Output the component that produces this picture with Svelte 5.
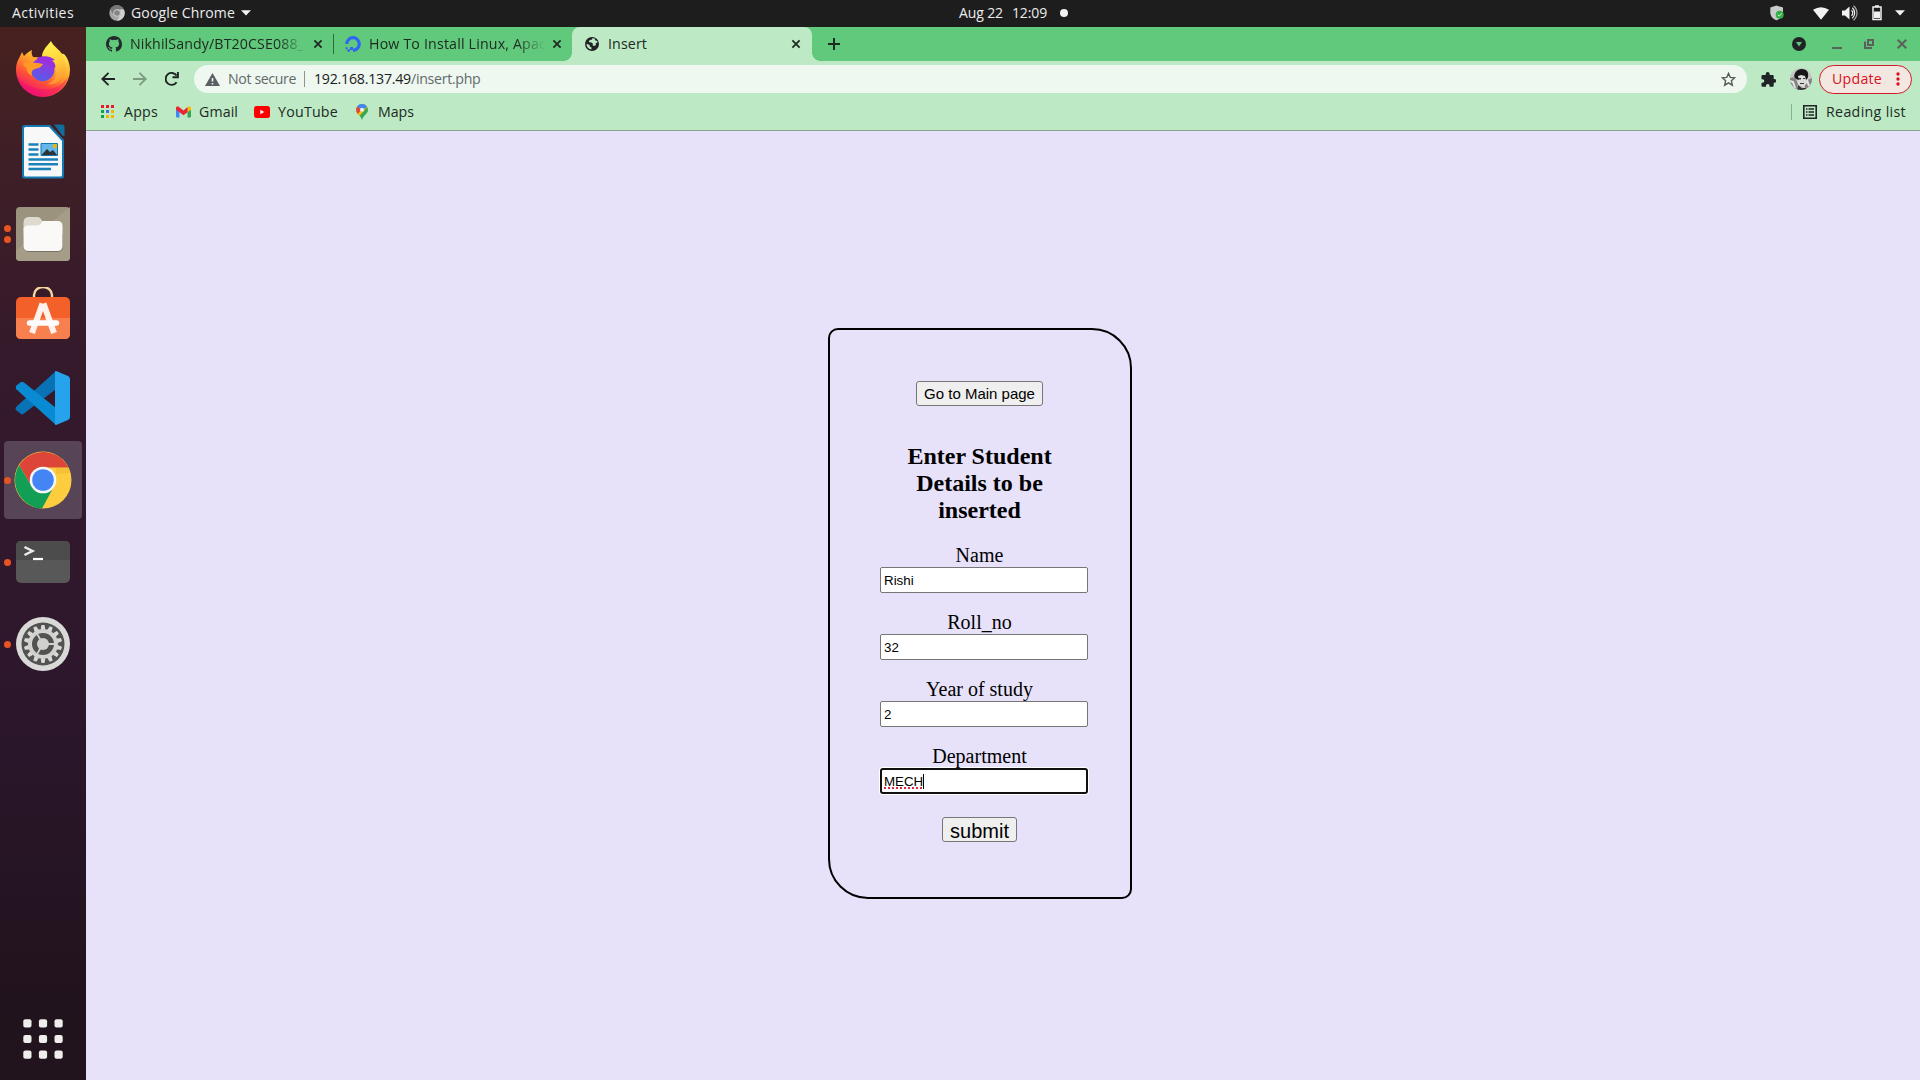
<script>
  const bookmarks = [
    { name: 'Apps', width: 34, icon: 'apps' },
    { name: 'Gmail', width: 39, icon: 'gmail' },
    { name: 'YouTube', width: 60, icon: 'youtube' },
    { name: 'Maps', width: 36, icon: 'maps' }
  ];

  const launchers = [
    { name: 'firefox', windows: 0 },
    { name: 'writer', windows: 0 },
    { name: 'files', windows: 2 },
    { name: 'software', windows: 0 },
    { name: 'code', windows: 0 },
    { name: 'chrome', windows: 1, active: true },
    { name: 'terminal', windows: 1 },
    { name: 'settings', windows: 1 }
  ];

  const fields = [
    { label: 'Name', value: 'Rishi' },
    { label: 'Roll_no', value: '32' },
    { label: 'Year of study', value: '2' },
    { label: 'Department', value: 'MECH', focused: true }
  ];

  const teeth = Array.from({ length: 14 }, (_, i) => (i * 360) / 14);
  const gridDots = [0, 1, 2].flatMap((r) => [0, 1, 2].map((c) => ({ r, c })));
  const appColors = ['#ea1a30', '#ea1a30', '#ea1a30', '#12a150', '#3b6ff0', '#f5b400', '#12a150', '#f5b400', '#f5b400'];

  // Adjusts tracking so that a label fills the width its slot has.
  function fit(node, width) {
    const natural = node.getBoundingClientRect().width;
    const spacing = (width - natural) / node.textContent.length;
    node.style.letterSpacing = `${spacing}px`;
  }
</script>

{#snippet cross()}
  <svg class="cross" width="16" height="16" viewBox="0 0 16 16"><path d="M4.4 4.4l7.2 7.2M11.6 4.4l-7.2 7.2" /></svg>
{/snippet}

{#snippet caret()}
  <svg width="10" height="6" viewBox="0 0 10 6"><path d="M0 .3h10L5 5.6z" fill="#f2f2f2" /></svg>
{/snippet}

<div class="desktop">
  <header class="topbar">
    <div class="top-left">
      <span use:fit={62}>Activities</span>
      <div class="app-menu">
        <svg width="16" height="16" viewBox="0 0 16 16">
          <circle cx="8" cy="8" r="7.7" fill="#a5a5a5" />
          <path d="M1.3 4.2A7.7 7.7 0 0 1 14.7 4.2H8L4.7 10z" fill="#777" />
          <path d="M14.8 4.4A7.7 7.7 0 0 1 8 15.7L11.3 10V4.4z" fill="#d0d0d0" />
          <circle cx="8" cy="8" r="3.8" fill="#c9c9c9" />
          <circle cx="8" cy="8" r="2.8" fill="#858585" />
        </svg>
        <span use:fit={104}>Google Chrome</span>
        {@render caret()}
      </div>
    </div>
    <div class="clock">
      <span use:fit={44}>Aug 22</span>
      <span use:fit={35}>12:09</span>
      <i></i>
    </div>
    <div class="status">
      <svg class="shield" width="14" height="16" viewBox="0 0 14 16">
        <path d="M6.500.5L13 2.600v4.800c0 3.700-2.800 6.200-6.500 7.900C2.800 13.600.3 11.100.3 7.400V2.600z" fill="#c9ccca" />
        <circle cx="9.700" cy="9.700" r="4" fill="#2faf45" />
        <path d="M7.700 9.700l1.500 1.500 2.600-2.900" fill="none" stroke="#d5f5da" />
      </svg>
      <svg class="wifi" width="16" height="13" viewBox="0 0 16 13"><path d="M0 2.800Q8-2.400 16 2.800L8 12.800z" fill="#f2f2f2" /></svg>
      <svg class="volume" width="16" height="16" viewBox="0 0 16 16">
        <path d="M0 5.500h3L7.500 1.500v13L3 10.500H0z" fill="#f2f2f2" />
        <path d="M9.500 5.200c1.700 1.600 1.700 4 0 5.600M10.300 2.800c3.100 2.600 3.100 7.800 0 10.400" fill="none" stroke="#f2f2f2" stroke-width="1.200" />
        <path d="M11.500.8c4.600 3.800 4.600 10.600 0 14.400" fill="none" stroke="#aaa" stroke-width="1.200" />
      </svg>
      <svg class="battery" width="10" height="16" viewBox="0 0 10 16">
        <path d="M3 1h4M1 2h8v12.500H1z" fill="none" stroke="#f2f2f2" stroke-width="1.500" />
        <path d="M2 6.500h6V13H2z" fill="#f2f2f2" />
      </svg>
      {@render caret()}
    </div>
  </header>

  <div class="workspace">
    <nav class="dock">
      {#each launchers as app}
        <div class="launcher" class:active={app.active}>
          <span class="pips">{#each Array(app.windows) as _}<i></i>{/each}</span>
          <svg width="58" height="58" viewBox="0 0 58 58">
            {#if app.name === 'firefox'}
              <defs>
                <linearGradient id="ff-body" x1=".85" y1=".1" x2=".3" y2="1">
                  <stop offset="0" stop-color="#ffe14a" /><stop offset=".35" stop-color="#ffa62a" />
                  <stop offset=".65" stop-color="#ff5038" /><stop offset="1" stop-color="#ee0a78" />
                </linearGradient>
                <linearGradient id="ff-globe" x1=".7" y1="0" x2=".3" y2="1">
                  <stop offset="0" stop-color="#a62bdc" /><stop offset="1" stop-color="#5060e8" />
                </linearGradient>
                <linearGradient id="ff-flame" x1=".4" y1="0" x2=".6" y2="1">
                  <stop offset="0" stop-color="#fff44f" /><stop offset=".5" stop-color="#ffd03c" /><stop offset="1" stop-color="#ff9030" />
                </linearGradient>
              </defs>
              <path d="M2 28C2 21 6 16 8 11c1 2 1.500 3 2 4 2-2 4-4 8-6-1 3 0 5 1 7 6 0 12 1 16 4 5-6 10-9 15-7 3 3 6 9 6 16a27 27 0 0 1-54 0z" fill="url(#ff-body)" />
              <path d="M37 0c2 6 11 9 12 16 3 7 4 14-1 21-4 5-9 7-14 6 7-3 10-9 7-16-2-5-6-9-13-11C28 10 32 6 37 0z" fill="url(#ff-flame)" />
              <circle cx="28.700" cy="28.500" r="11.800" fill="url(#ff-globe)" />
              <path d="M23 17c6-3 14-2 18 2l-3 .5c3 2 4 5 3 8-3-5-8-7-16-6z" fill="#9a2fdd" />
              <path d="M9 23c4-3 8-2 12-1 3 0 6 .5 8 1-2 4-5 4-8 5-3 1-4 3-3 7-4-3-6-5-5-8-2-1-3-2-4-4z" fill="#ff9b24" />
              <path d="M3 34c7 15 39 22 51 2-2 8-10 19-25 19C15 55 5 46 3 34z" fill="#f20d76" opacity=".45" />
            {:else if app.name === 'writer'}
              <path d="M10.500 2h25.500L50 17v36q0 2.500-2.500 2.500h-37Q8 55.500 8 53V4.500Q8 2 10.500 2z" fill="#1379b2" />
              <path d="M11.500 4H35L48 18v34q0 1.500-1.500 1.500h-35Q10 53.500 10 52V5.500Q10 4 11.500 4z" fill="#f8f8f8" />
              <path d="M40 1.500h8q2.500 0 2.500 2.500v9q-2 0-3-1.500z" fill="#126d9e" />
              <path d="M14.500 21.500h10M14.500 26.500h10M14.500 31.500h10M14.500 36.500H44M14.500 41.200H44M14.500 46H37" stroke="#1b82b9" stroke-width="2.600" />
              <path d="M27 20.500h16.500v12H27z" fill="#64b7e8" stroke="#1478af" />
              <circle cx="41" cy="23" r="2.200" fill="#e8b90a" />
              <path d="M27.500 32l5.500-6 3 3 3-2 4 5z" fill="#2e3335" />
            {:else if app.name === 'files'}
              <rect x="2" y="2" width="54" height="54" rx="4" fill="#9c937f" />
              <path d="M56 2L2 45v7q0 4 4 4h46q4 0 4-4z" fill="#a59d88" />
              <path d="M9.500 18q0-6 5-6h9q2 0 3.500 2l2 3v8h-19.500z" fill="#dedacf" />
              <rect x="9.500" y="26" width="39.500" height="21" rx="5" fill="#777166" />
              <path d="M9.500 25q0-4.500 4.500-4.500h9q2 0 4-2l1.500-2.500h15q5 0 5 5V41q0 5-5 5h-29q-5 0-5-5z" fill="#faf9f8" />
            {:else if app.name === 'software'}
              <path d="M20 10V8a9 8 0 0 1 18 0v2" fill="none" stroke="#f6d6a1" stroke-width="2.400" />
              <rect x="2" y="10" width="54" height="42" rx="5" fill="#f4602a" />
              <path d="M2 31h54v16q0 5-5 5H7q-5 0-5-5z" fill="#f87f4e" />
              <path d="M28.500 16.500L18 46M29.500 16.500L40 46" stroke="#fff1eb" stroke-width="6" />
              <path d="M15.500 36h27" stroke="#fff" stroke-width="5.500" stroke-linecap="round" />
            {:else if app.name === 'code'}
              <path d="M2 38q-1 2 0 3l5 4q1 1 3-.5L42 20V2z" fill="#0872b5" />
              <path d="M2 19q-1-2 1-3l4-3q1-.500 3 .500L42 39v17L2 20z" fill="#098bd4" />
              <path d="M42 2l12 5q2 1 2 3v38q0 2-2 3l-12 5q-1 0-1-1V3q0-1 1-1z" fill="#26a3ed" />
            {:else if app.name === 'chrome'}
              <circle cx="29" cy="29" r="28.500" fill="#fdcd3f" />
              <path d="M5.200 14.200A28.500 28.500 0 0 1 54.500 16.500H29L18 36z" fill="#dd4539" />
              <path d="M5.200 14.200A28.500 28.500 0 0 0 28 57.500L40 35.500 18 36z" fill="#139e56" />
              <path d="M42 17h13l.500 5L42 23z" fill="#efb52f" opacity=".55" />
              <circle cx="29" cy="29" r="13.300" fill="#f7f7f7" />
              <circle cx="29" cy="29" r="10.800" fill="#4385f4" />
            {:else if app.name === 'terminal'}
              <rect x="2" y="8" width="54" height="42" rx="5" fill="#585858" />
              <path d="M2 27V13q0-5 5-5h44q5 0 5 5v14z" fill="#4c4c4c" />
              <path d="M10.500 14l8 4-8 4" fill="none" stroke="#eee" stroke-width="2.400" />
              <path d="M19 26h10" stroke="#fff" stroke-width="2.200" />
            {:else}
              <circle cx="29" cy="29" r="27" fill="#d9d9d7" />
              <circle cx="29" cy="29" r="21.500" fill="#525252" />
              {#each teeth as angle}
                <path d="M27.300 14l.5-3.500h2.400l.5 3.500z" fill="#dadad8" stroke="#dadad8" transform="rotate({angle} 29 29)" />
              {/each}
              <circle cx="29" cy="29" r="13" fill="none" stroke="#d2d2d0" stroke-width="4" />
              <path d="M29 29h13M29 29l-6.500-11M29 29l-6.500 11" stroke="#d2d2d0" stroke-width="1.800" />
              <circle cx="29" cy="29" r="6" fill="#d0d0ce" />
            {/if}
          </svg>
        </div>
      {/each}
      <svg class="app-grid" width="40" height="40" viewBox="0 0 40 40">
        {#each gridDots as dot}
          <rect x={.3 + dot.c * 15.6} y={.3 + dot.r * 15.6} width="8.200" height="8.200" rx="2" fill="#efeeed" />
        {/each}
      </svg>
    </nav>

    <main class="browser">
      <div class="tabstrip">
        <div class="tab first">
          <svg width="16" height="16" viewBox="0 0 16 16"><path fill="#24292e" d="M8 0C3.580 0 0 3.580 0 8c0 3.540 2.290 6.530 5.470 7.590.4.070.55-.17.55-.38 0-.19-.01-.82-.01-1.490-2.010.37-2.530-.49-2.690-.94-.09-.23-.48-.94-.82-1.130-.28-.15-.68-.52-.01-.53.63-.01 1.080.58 1.230.82.72 1.210 1.870.87 2.330.66.07-.52.28-.87.51-1.070-1.780-.2-3.640-.89-3.640-3.950 0-.87.31-1.590.82-2.150-.08-.2-.36-1.020.08-2.120 0 0 .67-.21 2.200.82a7.600 7.600 0 0 1 4 0c1.530-1.040 2.200-.82 2.200-.82.44 1.100.16 1.920.08 2.120.51.56.82 1.270.82 2.150 0 3.070-1.870 3.750-3.650 3.950.29.25.54.73.54 1.480 0 1.070-.01 1.930-.01 2.200 0 .21.15.46.55.38A8 8 0 0 0 16 8c0-4.420-3.580-8-8-8z" /></svg>
          <div class="title fade"><span use:fit={174}>NikhilSandy/BT20CSE088_</span></div>
          {@render cross()}
          <i class="tab-divider"></i>
        </div>
        <div class="tab second">
          <svg width="16" height="16" viewBox="0 0 16 16">
            <path d="M8 14.300A6.300 6.300 0 1 0 1.700 8" fill="none" stroke="#2f66f5" stroke-width="3.200" />
            <path d="M5 11h3v3H5zM2.500 13.300H5v2.400H2.500zM.7 11.300h2v2h-2z" fill="#2f66f5" />
          </svg>
          <div class="title fade"><span use:fit={177}>How To Install Linux, Apac</span></div>
          {@render cross()}
        </div>
        <div class="tab current">
          <svg width="14" height="14" viewBox="0 0 14 14">
            <circle cx="7" cy="7" r="7" fill="#202326" />
            <path d="M7.500 1.200l-.8 1.600-2 .3-1 2 2.600.4 1.800 1.200-.6 1.500 1.700.8 1.800-1-.4-1.800 1.800-.7V4.300L9.700 3l.5-1.200zM1.600 6.800l3 1.300.3 1.600 1.700.7-.3 2A5.500 5.500 0 0 1 1.600 6.800z" fill="#bce9c4" />
          </svg>
          <div class="title"><span use:fit={39}>Insert</span></div>
          {@render cross()}
        </div>
        <svg class="plus" width="12" height="12" viewBox="0 0 12 12"><path d="M6 0v12M0 6h12" stroke="#1d2b20" stroke-width="2" /></svg>
        <div class="window-buttons">
          <svg width="14" height="14" viewBox="0 0 14 14"><circle cx="7" cy="7" r="7" fill="#202326" /><path d="M4 5h6L7 9.500z" fill="#61c97b" /></svg>
          <svg width="10" height="10" viewBox="0 0 10 10"><path d="M0 9h10" stroke="#5a615c" stroke-width="2" /></svg>
          <svg width="10" height="10" viewBox="0 0 10 10"><path d="M4 1h5v5H4zM1 2.500V9h7" fill="none" stroke="#5a615c" stroke-width="2" /></svg>
          <svg width="10" height="10" viewBox="0 0 10 10"><path d="M.7.7l8.600 8.600M9.300.7L.7 9.300" stroke="#5a615c" stroke-width="2" /></svg>
        </div>
      </div>

      <div class="toolbar">
        <svg width="14" height="14" viewBox="0 0 14 14"><path d="M14 7H1.500M7.500.8L1.300 7l6.200 6.200" fill="none" stroke="#202326" stroke-width="1.900" /></svg>
        <svg width="14" height="14" viewBox="0 0 14 14"><path d="M0 7h12.500M6.500.8L12.700 7l-6.200 6.200" fill="none" stroke="#7c9b81" stroke-width="1.900" /></svg>
        <svg width="14" height="14" viewBox="0 0 14 14"><path d="M11.600 10.300a6 6 0 1 1 0-6.800M12.900 0v5.300H7.500" fill="none" stroke="#202326" stroke-width="1.900" /></svg>
        <div class="omnibox">
          <svg width="15" height="13" viewBox="0 0 15 13"><path d="M7.500 0L15 13H0z" fill="#5b5f64" /><path d="M7.500 5v3.500M7.500 10v1.500" stroke="#eef8f0" stroke-width="1.600" /></svg>
          <span class="insecure" use:fit={68}>Not secure</span>
          <i class="divider"></i>
          <span class="url"><span class="host" use:fit={97}>192.168.137.49</span><span use:fit={69.5}>/insert.php</span></span>
          <svg class="star" width="15" height="15" viewBox="0 0 16 16"><path d="M8 1.500l1.900 4.300 4.700.4-3.500 3.200 1 4.700L8 11.600l-4.100 2.500 1-4.700L1.400 6.200l4.700-.4z" fill="none" stroke="#555b58" stroke-width="1.500" /></svg>
        </div>
        <svg class="puzzle" width="15" height="15" viewBox="0 0 15 15"><path d="M1.500 3H4.700V2a2 2 0 0 1 4 0v1h3q1 0 1 1v3h.7a1.900 1.900 0 0 1 0 3.800h-.7v3q0 1-1 1H8.600v-1a1.800 1.800 0 0 0-3.600 0v1H1.500q-1 0-1-1v-3h1a1.800 1.800 0 0 0 0-3.600h-1V4q0-1 1-1z" fill="#202326" /></svg>
        <svg class="avatar" width="22" height="22" viewBox="0 0 22 22">
          <defs><clipPath id="face"><circle cx="11" cy="11" r="11" /></clipPath></defs>
          <g clip-path="url(#face)">
            <path d="M0 0h22v22H0z" fill="#c6c6c4" />
            <path d="M0 10l5-1 3 7-2 6H0zM15 13l7-3v8l-7 3z" fill="#858585" />
            <path d="M0 13l3 1 2 6M17 12l2 6" stroke="#e8e8e8" stroke-width="2" fill="none" />
            <path d="M7 7l8-1 3 4-1 5-4 4-5-3z" fill="#dcdcda" />
            <path d="M4 8q1-6 7-7 6 0 7 4 1 5-2 7l-1-4-4-1-3 1 1 4-3-1z" fill="#171717" />
            <path d="M8 10h3v1.500H8zM13 10h2v1h-2zM10 15h4v1h-4zM8 17l4 3h4v2H7z" fill="#363636" />
          </g>
        </svg>
        <div class="update">
          <span use:fit={50}>Update</span>
          <svg width="4" height="14" viewBox="0 0 4 14"><g fill="#dc1022"><circle cx="2" cy="2" r="1.700" /><circle cx="2" cy="7" r="1.700" /><circle cx="2" cy="12" r="1.700" /></g></svg>
        </div>
      </div>

      <div class="bookmarks">
        {#each bookmarks as mark}
          <div class="bookmark {mark.icon}">
            {#if mark.icon === 'apps'}
              <svg width="14" height="14" viewBox="0 0 14 14">
                {#each appColors as color, i}
                  <rect x={(i % 3) * 5} y={Math.floor(i / 3) * 5} width="3" height="3" fill={color} />
                {/each}
              </svg>
            {:else if mark.icon === 'gmail'}
              <svg width="15" height="12" viewBox="0 0 15 12">
                <path d="M0 1.500L3.500 4v7.500H1q-1 0-1-1z" fill="#4285f4" />
                <path d="M15 1.500L11.500 4v7.500H14q1 0 1-1z" fill="#34a853" />
                <path d="M11.500 1l1.500-.8q2 0 2 1.800v1.700l-3.500 2.600z" fill="#fbbc04" />
                <path d="M0 3.700V2Q.1 0 2 .2L7.500 4.500 11.500 1v5.300l-4 3-4-3z" fill="#ea2435" />
              </svg>
            {:else if mark.icon === 'youtube'}
              <svg width="16" height="12" viewBox="0 0 16 12"><rect width="16" height="12" rx="2.500" fill="#f00" /><path d="M6.300 3.700v4.600l4-2.300z" fill="#fff" /></svg>
            {:else}
              <svg width="12" height="16" viewBox="0 0 12 16">
                <path d="M6 0a5.800 5.800 0 0 1 5.800 5.800C11.800 10 7.200 11 6 15.700 4.800 11 .2 10 .2 5.800A5.800 5.800 0 0 1 6 0z" fill="#34a853" />
                <path d="M.2 5.800Q.3 3.600 1.600 2.100L6 6l-4.300 4Q.2 8 .2 5.800z" fill="#ea4335" />
                <path d="M1.600 10l8.300-8.600Q11.800 3 11.800 5.800L3.500 12z" fill="#fbbc04" />
                <path d="M1.600 2.100Q3.200.1 6 0q3.500 0 5 3L7 6 4 5z" fill="#4285f4" />
                <path d="M11.800 5.800C11.800 10 7.200 11 6 15.700 5.600 14 5 13 3.800 11.800l7.300-8.600q.7 1 .7 2.600z" fill="#34a853" />
                <circle cx="6" cy="5.700" r="2" fill="#e9f6f2" />
              </svg>
            {/if}
            <span use:fit={mark.width}>{mark.name}</span>
          </div>
        {/each}
        <div class="reading">
          <svg width="14" height="14" viewBox="0 0 14 14"><path d="M.8.8h12.400v12.400H.8z" fill="none" stroke="#202326" stroke-width="1.600" /><path d="M3 4h1.500M3 7h1.500M3 10h1.500M5.500 4H11M5.500 7H11M5.500 10H11" stroke="#202326" stroke-width="1.400" /></svg>
          <span use:fit={80}>Reading list</span>
        </div>
      </div>

      <section class="page">
        <form class="card">
          <button type="button" class="home">Go to Main page</button>
          <h3>Enter Student<br />Details to be<br />inserted</h3>
          {#each fields as field}
            <div class="field">
              <span class="label">{field.label}</span>
              <div class="input" class:focused={field.focused}>
                {#if field.focused}<span class="misspelt">{field.value}</span><i class="cursor"></i>{:else}{field.value}{/if}
              </div>
            </div>
          {/each}
          <button type="button" class="submit">submit</button>
        </form>
      </section>
    </main>
  </div>
</div>

<style>
  :global(body) { margin: 0; overflow: hidden; }
  .desktop { width: 1920px; height: 1080px; display: flex; flex-direction: column; font: 14.2px/20px "Open Sans", "Noto Sans", sans-serif; color: #202a23; }
  svg { display: block; flex: none; }
  span { white-space: nowrap; }
  .topbar { height: 27px; box-sizing: border-box; padding-bottom: 1px; background: #1d1d1d; color: #ececec; display: grid; grid-template-columns: 959px 1fr auto; align-items: center; font-size: 14px; }
  .top-left { display: flex; gap: 35px; padding-left: 12px; }
  .app-menu { display: flex; align-items: center; gap: 6px; }
  .clock { display: flex; align-items: center; gap: 9px; }
  .clock i { width: 8px; height: 8px; border-radius: 50%; background: #f2f2f2; margin-left: 4px; }
  .status { display: flex; align-items: center; padding-right: 15px; }
  .shield { margin-right: 29px; }
  .wifi, .battery { margin-right: 13px; }
  .volume { margin-right: 14px; }
  .workspace { flex: 1; display: flex; min-height: 0; }
  .dock { width: 86px; box-sizing: border-box; display: flex; flex-direction: column; align-items: center; gap: 4px; padding: 4px 0 21px; background: linear-gradient(#48211f 0, #3e1f27 140px, #351a2b 320px, #2f172c 600px, #2a162a 720px, #21131d 970px, #21141d 100%); }
  .launcher { width: 78px; height: 78px; border-radius: 4px; display: grid; place-items: center; position: relative; }
  .launcher.active { background: #574457; }
  .pips { position: absolute; left: 0; top: 0; height: 100%; display: flex; flex-direction: column; justify-content: center; gap: 4px; }
  .pips i { width: 7px; height: 7px; border-radius: 50%; background: #e95420; }
  .app-grid { margin-top: auto; }
  .browser { flex: 1; min-width: 0; display: flex; flex-direction: column; }
  .tabstrip { height: 34px; background: #61c97b; display: flex; align-items: center; }
  .tab { flex: none; box-sizing: border-box; height: 34px; display: flex; align-items: center; gap: 8px; }
  .first { width: 248px; padding-left: 20px; }
  .tab-divider { flex: none; width: 1px; height: 20px; margin-left: -1px; background: #2f6a3c; }
  .second { width: 238px; padding-left: 11px; }
  .current { position: relative; width: 240px; padding-left: 13px; gap: 9px; background: #bde9c4; border-radius: 8px 8px 0 0; }
  .current::before, .current::after { content: ""; position: absolute; bottom: 0; width: 8px; height: 8px; }
  .current::before { left: -8px; background: radial-gradient(circle at 0 0, transparent 7.500px, #bde9c4 8px); }
  .current::after { right: -8px; background: radial-gradient(circle at 100% 0, transparent 7.500px, #bde9c4 8px); }
  .title { flex: none; width: 176px; margin-right: -4px; overflow: hidden; }
  .current .title { width: 171px; margin-right: 0; }
  .fade { mask-image: linear-gradient(90deg, #000 84%, transparent); }
  .cross { fill: none; stroke: #202a23; stroke-width: 1.800; }
  .plus { margin-left: 16px; }
  .window-buttons { margin-left: auto; padding-right: 13px; display: flex; align-items: center; gap: 22px; }
  .window-buttons svg:first-child { margin-right: 5px; }
  .window-buttons svg:nth-child(2) { margin-left: -1px; }
  .window-buttons svg:nth-child(3) { margin-right: 1px; }
  .toolbar { height: 36px; background: #bde9c4; display: flex; align-items: center; padding-left: 15px; gap: 18px; }
  .omnibox { width: 1553px; height: 28px; box-sizing: border-box; border-radius: 14px; background: #eef8f0; margin-left: -3px; padding: 0 11px 0 11px; display: flex; align-items: center; color: #63696a; }
  .insecure { margin-left: 8px; }
  .divider { width: 1px; height: 16px; background: #8c9690; margin: 0 9px 0 8px; }
  .url { display: flex; }
  .host { color: #1c2021; }
  .star { margin-left: auto; }
  .puzzle { margin-left: -4px; }
  .avatar { margin-left: -4px; }
  .update { box-sizing: border-box; width: 93px; height: 29px; margin-left: -11px; border: 1px solid #d01a26; border-radius: 15px; background: #f3e8e1; color: #d9101e; display: flex; align-items: center; justify-content: space-between; padding: 0 11px 0 12px; }
  .bookmarks { box-sizing: border-box; height: 34px; background: #bde9c4; border-bottom: 1px solid #86a68b; display: flex; align-items: center; padding: 0 14px 3px 15px; }
  .bookmark { display: flex; align-items: center; gap: 9px; margin-right: 18px; }
  .bookmark.gmail { margin-right: 16px; gap: 8px; }
  .bookmark.youtube { gap: 8px; margin-right: 18px; }
  .bookmark.maps { gap: 10px; }
  .reading { margin-left: auto; display: flex; align-items: center; gap: 9px; padding-left: 12px; background: linear-gradient(#86b38d, #86b38d) left center / 1px 16px no-repeat; }
  .page { flex: 1; background: #e7e2fa; display: flex; align-items: flex-start; padding: 197px 0 0 742px; }
  .card { box-sizing: border-box; width: 304px; height: 570.500px; border: 2px solid #000; border-radius: 10px 40px; padding: 51px 50.500px 0 49.500px; display: flex; flex-direction: column; align-items: center; font-family: "Liberation Serif", serif; color: #000; }
  button { box-sizing: border-box; border: 1px solid #767676; border-radius: 3px; background: #efefef; color: #000; padding: 0; font-family: "Liberation Sans", sans-serif; }
  .home { width: 127px; height: 25px; font-size: 15px; line-height: 23px; }
  h3 { margin: 37px 0 20px; font-size: 24px; line-height: 27px; text-align: center; }
  .field { width: 208px; margin: 0 0 18px 9px; }
  .label { display: block; font-size: 20px; line-height: 23px; text-align: center; margin-left: -9px; }
  .input { box-sizing: border-box; width: 208px; height: 26px; border: 1px solid #767676; border-radius: 2px; background: #fff; font: 13.333px/24px "Liberation Sans", sans-serif; padding-left: 3px; padding-top: 1px; display: flex; align-items: center; }
  .focused { border: 2px solid #101010; border-radius: 3px; box-shadow: 0 0 0 1px #fff; padding-left: 2px; }
  .misspelt { line-height: 16px; text-decoration: underline dotted #e0263c 1.500px; text-underline-offset: 2px; }
  .cursor { width: 1px; height: 15px; background: #000; }
  .submit { width: 75px; height: 25px; padding-top: 2px; font-size: 20px; line-height: 22px; margin-top: 5px; }
</style>
